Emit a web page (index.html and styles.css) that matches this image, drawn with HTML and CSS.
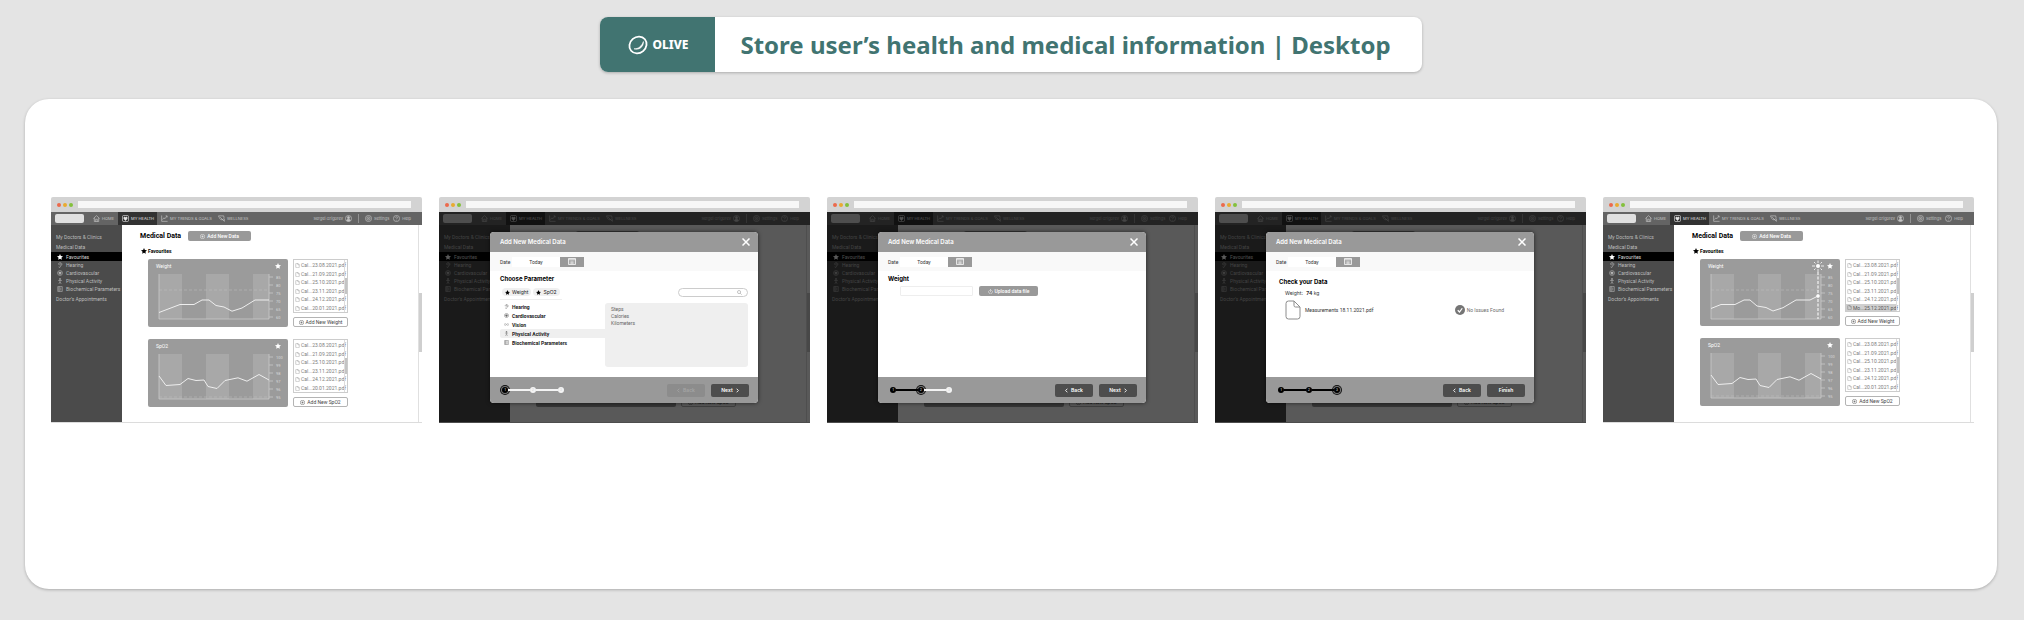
FILE: index.html
```html
<!DOCTYPE html>
<html lang="en">
<head>
<meta charset="utf-8">
<meta name="viewport" content="width=device-width, initial-scale=1">
<title>Store user’s health and medical information | Desktop</title>
<link rel="stylesheet" href="styles.css">
</head>
<body>
<svg class="sprite" aria-hidden="true">
  <symbol id="i-star" viewBox="0 0 16 16"><path fill="currentColor" d="M8 0l2.400 5.400 5.600.6-4.200 3.800 1.200 5.700-5-2.900-5 2.900 1.200-5.700L0 6l5.600-.6z"/></symbol>
  <symbol id="i-home" viewBox="0 0 16 16"><path d="M1 8l7-6.500L15 8M3 6.500V15h10V6.500M6.200 15V9.500h3.600V15"/></symbol>
  <symbol id="i-health" viewBox="0 0 16 16"><rect x="1" y="1" width="14" height="14" rx="3"/><path fill="currentColor" d="M8 12.500C3 8.800 3.500 4.800 6 4.800c1 0 1.600.6 2 1.300.4-.7 1-1.300 2-1.300 2.500 0 3 4-2 7.700z"/></symbol>
  <symbol id="i-trend" viewBox="0 0 16 16"><path d="M1.500 1v13.500H15M3.500 10.500l3-4 2.500 2 4.500-6M10.500 2h3.500v3.500"/></symbol>
  <symbol id="i-leaf" viewBox="0 0 16 16"><path d="M1 2h12c2 5 0 9-4 9-5 0-5-4-8-9zM5 5l9.500 9.500M14.500 9v5.500"/></symbol>
  <symbol id="i-user" viewBox="0 0 16 16"><circle cx="8" cy="8" r="7"/><circle cx="8" cy="6" r="2.500" fill="currentColor"/><path fill="currentColor" d="M3.800 12.500c1-4 7.400-4 8.400 0-2 2-6.400 2-8.400 0z"/></symbol>
  <symbol id="i-gear" viewBox="0 0 16 16"><circle cx="8" cy="8" r="7"/><circle cx="8" cy="8" r="3.600"/><circle cx="8" cy="8" r="1"/></symbol>
  <symbol id="i-help" viewBox="0 0 16 16"><circle cx="8" cy="8" r="7"/><path d="M5.800 6.200c0-3 4.500-2.600 4.400 0 0 1.600-2.200 1.600-2.200 3.400M8 11.200v1.300"/></symbol>
  <symbol id="i-ear" viewBox="0 0 16 16"><path d="M4 7c-1-7 9-7 9-1 0 4-4 4-4.500 7S4.500 15 5 12M6.500 7c0-3.500 4-3.500 4-.5 0 2-2.500 1.500-2.500 3.500"/></symbol>
  <symbol id="i-heart" viewBox="0 0 16 16"><circle cx="8" cy="8" r="6.500"/><path fill="currentColor" d="M8 12C4 9 4.500 5.500 6.500 5.500c.8 0 1.200.4 1.500 1 .3-.6.700-1 1.500-1C11.500 5.500 12 9 8 12z"/></symbol>
  <symbol id="i-walk" viewBox="0 0 16 16"><circle cx="8" cy="2.500" r="1.500" fill="currentColor"/><path d="M3 6.500h10M8 5v5M8 10l-3 5.500M8 10l3 5.500"/></symbol>
  <symbol id="i-tube" viewBox="0 0 16 16"><path d="M2 1.500h12v13H2zM6 1.500v13M10 4v8M3 5h2M3 8h2M3 11h2"/></symbol>
  <symbol id="i-glasses" viewBox="0 0 24 16"><circle cx="6" cy="8" r="4.500"/><circle cx="18" cy="8" r="4.500"/><path d="M10.500 8h3"/></symbol>
  <symbol id="i-file" viewBox="0 0 16 20"><path d="M1 3.500Q1 1 3.500 1H9l6 6v9.500q0 2.500-2.500 2.500h-9Q1 19 1 16.500zM9 1v4.500Q9 7 10.500 7H15"/></symbol>
  <symbol id="i-plus" viewBox="0 0 16 16"><circle cx="8" cy="8" r="7"/><path d="M8 4.500v7M4.500 8h7"/></symbol>
  <symbol id="i-upload" viewBox="0 0 16 16"><path d="M5 4a6 6 0 1 0 6 0M8 10V1.500M5.500 4L8 1.500 10.500 4"/></symbol>
  <symbol id="i-close" viewBox="0 0 16 16"><path d="M1 1l14 14M15 1L1 15"/></symbol>
  <symbol id="i-calendar" viewBox="0 0 16 14"><path d="M1 1h14v12H1zM1 3.500h14"/><path stroke-dasharray="1.500 1" d="M3.500 6.500h9M3.500 9h9M3.500 11h9"/></symbol>
  <symbol id="i-search" viewBox="0 0 16 16"><circle cx="6.500" cy="6.500" r="5"/><path d="M10.200 10.200L15 15"/></symbol>
  <symbol id="i-left" viewBox="0 0 10 16"><path d="M8 2L2 8l6 6"/></symbol>
  <symbol id="i-right" viewBox="0 0 10 16"><path d="M2 2l6 6-6 6"/></symbol>
  <symbol id="i-check" viewBox="0 0 20 20"><circle cx="10" cy="10" r="10" fill="#757575" stroke="none"/><path stroke="#fff" stroke-width="2.500" d="M5.500 10.500L9 14l5.500-7.500"/></symbol>
</svg>

<header class="banner">
  <div class="brand">
    <svg class="brand-mark" viewBox="0 0 20 20"><ellipse cx="10" cy="10" rx="9" ry="8" stroke-width="1.800" transform="rotate(-40 10 10)"/><path fill="currentColor" stroke-width=".6" d="M15.400 6.500C15.800 12 11 15.400 6 13.800 10.500 14 13.800 11 15.400 6.500z"/></svg>
    <span>OLIVE</span>
  </div>
  <h1>Store user’s health and medical information | Desktop</h1>
</header>

<main class="board">
  <section class="screen" data-marker="no"></section>

  <section class="screen">
    <div class="overlay">
      <div class="modal" role="dialog" aria-label="Add New Medical Data, step 1">
        <div class="modal-head"><h2>Add New Medical Data</h2><button class="close" aria-label="Close"><svg><use href="#i-close"/></svg></button></div>
        <div class="date-row"><label for="date1">Date</label><input id="date1" value="Today"><button class="cal" aria-label="Open calendar"><svg><use href="#i-calendar"/></svg></button></div>
        <div class="modal-body">
          <h3>Choose Parameter</h3>
          <div class="filter">
            <div class="chips">
              <button><svg><use href="#i-star"/></svg>Weight</button>
              <button><svg><use href="#i-star"/></svg>SpO2</button>
            </div>
            <label class="search"><input type="search" aria-label="Search parameters"><svg><use href="#i-search"/></svg></label>
          </div>
          <div class="picker">
            <ul class="groups">
              <li><svg><use href="#i-ear"/></svg>Hearing</li>
              <li><svg><use href="#i-heart"/></svg>Cardiovascular</li>
              <li><svg><use href="#i-glasses"/></svg>Vision</li>
              <li class="on"><svg><use href="#i-walk"/></svg>Physical Activity</li>
              <li><svg><use href="#i-tube"/></svg>Biochemical Parameters</li>
            </ul>
            <ul class="options"><li>Steps</li><li>Calories</li><li>Kilometers</li></ul>
          </div>
        </div>
        <div class="modal-foot">
          <ol class="steps"><li class="now">1</li><li class="todo">2</li><li class="todo">3</li></ol>
          <button disabled><svg><use href="#i-left"/></svg>Back</button>
          <button>Next<svg><use href="#i-right"/></svg></button>
        </div>
      </div>
    </div>
  </section>

  <section class="screen">
    <div class="overlay">
      <div class="modal" role="dialog" aria-label="Add New Medical Data, step 2">
        <div class="modal-head"><h2>Add New Medical Data</h2><button class="close" aria-label="Close"><svg><use href="#i-close"/></svg></button></div>
        <div class="date-row"><label for="date2">Date</label><input id="date2" value="Today"><button class="cal" aria-label="Open calendar"><svg><use href="#i-calendar"/></svg></button></div>
        <div class="modal-body">
          <h3>Weight</h3>
          <div class="entry">
            <input aria-label="Weight">
            <button class="fill"><svg><use href="#i-upload"/></svg>Upload data file</button>
          </div>
        </div>
        <div class="modal-foot">
          <ol class="steps"><li>1</li><li class="now">2</li><li class="todo">3</li></ol>
          <button><svg><use href="#i-left"/></svg>Back</button>
          <button>Next<svg><use href="#i-right"/></svg></button>
        </div>
      </div>
    </div>
  </section>

  <section class="screen">
    <div class="overlay">
      <div class="modal" role="dialog" aria-label="Add New Medical Data, step 3">
        <div class="modal-head"><h2>Add New Medical Data</h2><button class="close" aria-label="Close"><svg><use href="#i-close"/></svg></button></div>
        <div class="date-row"><label for="date3">Date</label><input id="date3" value="Today"><button class="cal" aria-label="Open calendar"><svg><use href="#i-calendar"/></svg></button></div>
        <div class="modal-body review">
          <h3>Check your Data</h3>
          <p class="reading">Weight: <span><b>74</b> kg</span></p>
          <div class="upload">
            <svg class="doc"><use href="#i-file"/></svg><span>Measurements 18.11.2021.pdf</span>
            <span class="verdict"><svg><use href="#i-check"/></svg>No Issues Found</span>
          </div>
        </div>
        <div class="modal-foot">
          <ol class="steps"><li>1</li><li>2</li><li class="now">3</li></ol>
          <button><svg><use href="#i-left"/></svg>Back</button>
          <button>Finish</button>
        </div>
      </div>
    </div>
  </section>

  <section class="screen" data-marker="yes"></section>
</main>
<script src="app.js"></script>
</body>
</html>
```

FILE: styles.css
```css
*, *::before, *::after { box-sizing: border-box; }

body {
  margin: 0;
  min-height: 100vh;
  padding: 17px 27px 31px 25px;
  display: flex;
  flex-direction: column;
  align-items: center;
  gap: 27px;
  background: #e4e4e4;
  font-family: Inter, "Liberation Sans", sans-serif;
}

h1, h2, h3, p, ul, ol { margin: 0; padding: 0; }
ul, ol { list-style: none; }
a { color: inherit; text-decoration: none; }
button, input { font: inherit; color: inherit; border: 0; padding: 0; margin: 0; background: none; min-width: 0; }
input[type="search"] { appearance: none; }
button { display: flex; align-items: center; justify-content: center; gap: 2px; white-space: nowrap; }
svg { display: block; flex: none; width: 5px; height: 5px; fill: none; stroke: currentColor; stroke-width: 1.5; overflow: visible; }
.sprite { position: absolute; width: 0; height: 0; }

/* Page title */
.banner {
  display: flex;
  border-radius: 8px;
  overflow: hidden;
  background: #fff;
  box-shadow: 0 1px 3px rgba(0, 0, 0, .25);
}
.brand {
  display: flex;
  align-items: center;
  gap: 4px;
  padding: 0 27px 0 28px;
  background: #417471;
  color: #fff;
  font: 800 12px "Noto Sans", sans-serif;
}
.brand-mark { width: 20px; height: 20px; }
h1 {
  padding: 0 31px 0 25px;
  color: #417471;
  font: 700 24px/55px "Noto Sans", sans-serif;
}

/* Board with the five screens */
.board {
  flex: 1;
  align-self: stretch;
  display: grid;
  grid-template-columns: repeat(5, minmax(0, 1fr));
  align-items: start;
  gap: 17px;
  padding: 98px 23px 98px 26px;
  border-radius: 24px;
  background: #fff;
  box-shadow: 0 1px 3px rgba(0, 0, 0, .25);
}
.screen { position: relative; font-size: 5px; line-height: 6px; }

.chrome {
  display: flex;
  align-items: center;
  gap: 2px;
  height: 15px;
  padding: 0 11px 0 6px;
  border-radius: 2px 2px 0 0;
  background: #d3d3d3;
}
.chrome i { width: 4px; height: 4px; border-radius: 50%; }
.chrome .r { background: #ec6a4c; }
.chrome .y { background: #e9ab30; }
.chrome .g { background: #83c13c; }
.chrome input { flex: 1; height: 7px; margin-left: 3px; background: #f7f7f7; }

.nav {
  display: flex;
  align-items: center;
  height: 13px;
  padding: 0 11px 0 4px;
  background: #646464;
  color: #c4c4c4;
  font-size: 4px;
  white-space: nowrap;
}
.nav a { display: flex; align-items: center; gap: 2px; height: 100%; margin-right: 6px; }
.nav a.on { margin: 0 4px 0 -2px; padding: 0 3px 0 4px; background: #323232; color: #e4e4e4; }
.nav svg { width: 7px; height: 7px; }
.nav .logo { width: 29px; height: 9px; margin-right: 9px; border-radius: 2px; background: #e0e0e0; }
.nav .who { margin: 0 6px 0 auto; }
.nav .set { margin-right: 4px; padding-left: 6px; border-left: 1px solid #929292; height: 9px; }
.nav .help { margin-right: 0; }

.app { display: flex; height: 198px; border-bottom: 1px solid #dcdcdc; background: #fff; font-family: Roboto, sans-serif; }
.side { flex: 0 0 71px; padding-top: 7px; background: #4b4b4b; color: #bcbcbc; white-space: nowrap; }
.side a { display: flex; align-items: center; height: 10px; padding-left: 5px; }
.side a.sub { height: 8px; gap: 3px; padding-left: 6px; }
.side a.on { height: 9px; background: #000; color: #d8d8d8; }
.side a:last-child { height: 12px; }
.side svg { width: 6px; height: 6px; }
.side .on svg { color: #fff; stroke: none; }

.content { flex: 1; min-width: 0; padding: 6px 70px 0 18px; }
.content-head { display: flex; align-items: center; gap: 7px; }
.content h2 { font-size: 7px; line-height: 10px; font-weight: 700; white-space: nowrap; }
.fill { height: 10px; border-radius: 2px; background: #999; color: #fff; font-weight: 500; }
.content .fill { width: 63px; }
.content h3 { display: flex; align-items: center; gap: 1px; padding: 7px 0 5px 1px; font-size: 5px; line-height: 6px; font-weight: 700; }
.content h3 svg { width: 6px; height: 6px; stroke: none; }
.record { display: grid; grid-template-columns: 140fr 55fr; gap: 5px; margin: 0 0 12px 8px; }
.card { padding: 4px 7px 7px 8px; border-radius: 2px; background: #9b9b9b; color: #fff; }
.card-head { display: flex; justify-content: space-between; padding-bottom: 4px; line-height: 7px; }
.card-head svg { width: 6px; height: 6px; stroke: none; }
.card .chart { width: 100%; height: auto; font-size: 4px; stroke: none; }
.chart text { fill: #d8d8d8; }
.band { fill: #a8a8a8; }
.axis { stroke: #cfcfcf; stroke-width: .7; }
.goal { stroke: #c2c2c2; stroke-width: .5; stroke-dasharray: 3 2; }
.line { stroke: #eee; stroke-width: 1; stroke-linejoin: round; }
.cursor { stroke: #f4f4f4; stroke-width: 1.2; stroke-dasharray: 3 1.5; }
.rays { stroke: #fff; stroke-width: .8; }
.dot { fill: #fff; }

.files { display: flex; flex-direction: column; gap: 4px; min-width: 0; }
.files ul { position: relative; flex: 1; padding: 1px 3px 0 0; border: 1px solid #ccc; color: #7c7c7c; }
.files ul::before { content: ""; position: absolute; top: 0; right: 0; width: 3px; height: 100%; border-left: 1px solid #ddd; }
.files ul::after { content: ""; position: absolute; top: 18px; right: 0; width: 2px; height: 16px; background: #c4c4c4; }
.files li { display: flex; align-items: center; gap: 1px; height: 8px; margin-bottom: 1px; padding-left: 1px; line-height: 8px; white-space: nowrap; }
.files li:nth-child(even) { margin-bottom: 0; }
.files li.on { height: 7px; background: #cfcfcf; color: #555; }
.files button { height: 10px; border: 1px solid #b4b4b4; border-radius: 2px; color: #444; }
.scroll { flex: 0 0 4px; padding-top: 68px; border-left: 1px solid #e0e0e0; }
.scroll::before { content: ""; display: block; height: 59px; background: #cfcfcf; }

/* Dimmed screens */
.overlay {
  position: absolute;
  inset: 15px 0 0;
  display: flex;
  align-items: flex-start;
  justify-content: center;
  padding: 20px 52px 0 51px;
  background: rgba(0, 0, 0, .65);
}
.modal {
  flex: 1;
  min-width: 0;
  border-radius: 4px;
  overflow: hidden;
  background: #fff;
  box-shadow: 0 0 4px rgba(0, 0, 0, .6);
}
.modal-head { display: flex; align-items: center; justify-content: space-between; height: 20px; padding: 0 8px 0 10px; background: #999; color: #fff; }
.modal-head h2 { font-size: 6px; font-weight: 600; }
.close svg { width: 8px; height: 8px; stroke-width: 3; }
.date-row { display: flex; align-items: center; height: 19px; padding-left: 10px; background: #f9f9f9; color: #333; font-family: Roboto, sans-serif; }
.date-row input { width: 48px; height: 10px; margin-left: 2px; background: #fff; text-align: center; color: #333; }
.date-row label { width: 10px; }
.cal { width: 24px; height: 10px; background: #999; color: #fff; }
.cal svg { width: 8px; height: 7px; }
.modal-body { height: 106px; padding: 4px 10px 0; }
.modal-body h3 { font-size: 6px; line-height: 7px; font-weight: 700; }
.filter { display: flex; justify-content: space-between; align-items: flex-start; padding-top: 6px; }
.chips { display: flex; gap: 2px; width: 62px; padding: 0 0 3px 2px; border-bottom: 1px solid #eee; }
.chips button { height: 8px; padding: 0 3px; border-radius: 4px; background: #f0f0f0; color: #222; }
.chips svg { color: #000; stroke: none; }
.search { display: flex; align-items: center; width: 70px; height: 9px; padding-right: 5px; border: 1px solid #ccc; border-radius: 5px; }
.search input { flex: 1; height: 6px; }
.search svg { color: #888; }
.picker { display: flex; padding-top: 2px; }
.groups { flex: 0 0 105px; font-family: Roboto, sans-serif; font-weight: 700; color: #222; }
.groups li { display: flex; align-items: center; gap: 3px; height: 9px; padding-left: 4px; border-radius: 2px 0 0 2px; }
.groups svg { color: #666; }
.groups .on { background: #efefef; }
.options { flex: 1; height: 64px; margin-top: 1px; padding: 3px 6px; border-radius: 3px; background: #efefef; color: #666; font-family: Roboto, sans-serif; }
.options li { line-height: 7px; }
.entry { display: flex; gap: 6px; padding: 4px 0 0 12px; font-family: Roboto, sans-serif; }
.entry input { width: 73px; height: 10px; border: 1px solid #eee; border-radius: 1px; }
.entry .fill { width: 59px; }
.review { padding: 7px 30px 0 13px; }
.reading { padding: 5px 0 0 6px; color: #333; }
.reading span { padding-left: 2px; }
.upload { display: flex; align-items: center; gap: 4px; padding: 4px 0 0 6px; color: #333; font-family: Roboto, sans-serif; }
.upload .doc { width: 16px; height: 20px; color: #8c8c8c; stroke-width: 1; }
.verdict { display: flex; align-items: center; gap: 2px; margin-left: auto; color: #6c6c6c; }
.verdict svg { width: 10px; height: 10px; }
.modal-foot { display: flex; align-items: center; gap: 6px; height: 26px; padding: 0 9px 0 10px; background: #999; }
.modal-foot button { width: 38px; height: 13px; gap: 3px; border-radius: 2px; background: #4d4d4d; color: #fff; font-weight: 600; }
.modal-foot button:disabled { background: #8c8c8c; color: #a4a4a4; }
.modal-foot svg { width: 3px; height: 5px; stroke-width: 3; }
.steps { display: flex; align-items: center; gap: 22px; margin-right: auto; padding-left: 2px; }
.steps li { position: relative; width: 6px; height: 6px; border-radius: 50%; background: #000; color: #fff; font-size: 3px; line-height: 6px; text-align: center; }
.steps li + li::before { content: ""; position: absolute; top: 2px; right: 6px; width: 22px; height: 2px; background: #000; }
.steps .todo, .steps li + .todo::before { background: #f4f4f4; }
.steps .todo { color: #ccc; }
.steps .now { box-shadow: 0 0 0 1px #777, 0 0 0 2px #111; }
```

FILE: app.js
```js
const icon = (name) => `<svg aria-hidden="true"><use href="#i-${name}"/></svg>`;

const dates = ["Cal...23.08.2021.pdf", "Cal...21.09.2021.pdf", "Cal...25.10.2021.pdf",
  "Cal...23.11.2021.pdf", "Cal...24.12.2021.pdf", "Cal...20.01.2021.pdf"];

const weight = {
  title: "Weight", labels: [85, 80, 75, 70, 65, 60], goal: 16,
  line: "0,38.5 21,30.5 35,30.5 43,26 50,26 57,31.5 65,33 73,37.2 83,34 96,26 110,26",
  marked: "0,34.5 10,30.5 24,30.5 33,26 39,26 46,32 55,33.5 62,37 72,33.7 85,26 99,26 107,22"
};

const oxygen = {
  title: "SpO2", labels: [100, 99, 98, 97, 96, 95], goal: 43,
  line: "0,22 7,31.5 21,30.5 29,24.5 37,26.5 45,26 49,32.5 58,34.5 66,26.5 79,23.8 88,27.2 100,20.5 110,26"
};

function chart(data, marker) {
  const ticks = data.labels.map((label, i) => {
    const y = 3 + i * 8;
    return `<path class="axis" d="M110 ${y}h4"/><text x="117" y="${y + 1.5}">${label}</text>`;
  }).join("");
  const cursor = marker ? `<path class="cursor" d="M107 -2v47"/><circle class="dot" cx="107" cy="22" r="1.8"/>
    <circle class="dot" cx="107" cy="-8" r="2"/><path class="rays" d="M101 -8h3M110 -8h3M107 -13.5v2.5M107 -5v3M103 -12l1.500 1.500M111 -12l-1.500 1.500M103 -4l1.500-1.500M111 -4l-1.500-1.500"/>` : "";
  return `<svg class="chart" viewBox="-3 0 125 45">
    <path class="band" d="M0 0h23v45H0zM47 0h23v45H47zM94 0h16v45H94z"/>
    <path class="axis" d="M0 0v45h110V0"/><path class="goal" d="M0 ${data.goal}h110"/>
    <polyline class="line" points="${marker ? data.marked : data.line}"/>${ticks}${cursor}</svg>`;
}

function record(data, marker) {
  const names = marker ? [...dates.slice(0, 5), "Mo...25.12.2021.pdf"] : dates;
  const items = names.map((name) =>
    `<li${name.startsWith("Mo") ? ' class="on"' : ""}>${icon("file")}${name}</li>`).join("");
  return `<div class="record">
    <div class="card"><div class="card-head"><span>${data.title}</span>${icon("star")}</div>${chart(data, marker)}</div>
    <div class="files"><ul>${items}</ul><button>${icon("plus")}Add New ${data.title}</button></div>
  </div>`;
}

const shell = (marker) => `
  <div class="chrome"><i class="r"></i><i class="y"></i><i class="g"></i><input aria-label="Address"></div>
  <nav class="nav">
    <span class="logo"></span>
    <a href="#">${icon("home")}HOME</a>
    <a href="#" class="on">${icon("health")}MY HEALTH</a>
    <a href="#">${icon("trend")}MY TRENDS &amp; GOALS</a>
    <a href="#">${icon("leaf")}WELLNESS</a>
    <a href="#" class="who">Sergei Grigorev${icon("user")}</a>
    <a href="#" class="set">${icon("gear")}Settings</a>
    <a href="#" class="help">${icon("help")}Help</a>
  </nav>
  <div class="app">
    <nav class="side">
      <a href="#">My Doctors &amp; Clinics</a>
      <a href="#">Medical Data</a>
      <a href="#" class="sub on">${icon("star")}Favourites</a>
      <a href="#" class="sub">${icon("ear")}Hearing</a>
      <a href="#" class="sub">${icon("heart")}Cardiovascular</a>
      <a href="#" class="sub">${icon("walk")}Physical Activity</a>
      <a href="#" class="sub">${icon("tube")}Biochemical Parameters</a>
      <a href="#">Doctor’s Appointments</a>
    </nav>
    <div class="content">
      <div class="content-head"><h2>Medical Data</h2><button class="fill">${icon("plus")}Add New Data</button></div>
      <h3>${icon("star")}Favourites</h3>
      ${record(weight, marker)}
      ${record(oxygen, false)}
    </div>
    <div class="scroll"></div>
  </div>`;

document.querySelectorAll(".screen").forEach((screen) => {
  screen.insertAdjacentHTML("afterbegin", shell(screen.dataset.marker === "yes"));
});
```
